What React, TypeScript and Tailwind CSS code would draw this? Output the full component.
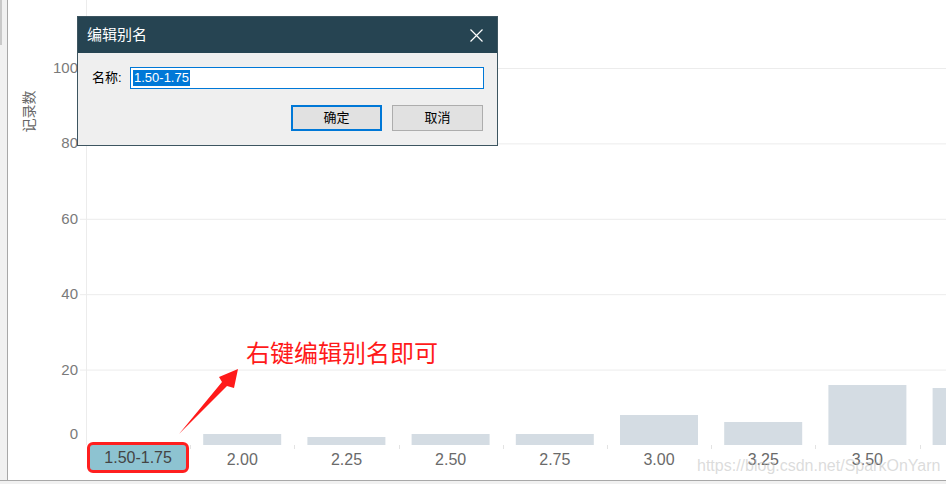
import React from 'react';

const bars = [0, 11, 8, 11, 11, 30, 23, 60, 57];
const cats = ['1.50-1.75', '2.00', '2.25', '2.50', '2.75', '3.00', '3.25', '3.50', ''];
const ticks = [100, 80, 60, 40, 20, 0];

const CAT_W = 104.2;
const PLOT_LEFT = 6; // axis inside the svg column
const yOf = (v: number) => 445 - v * 3.77;

const PlotArea: React.FC = () => (
  <svg width={866} height={445} className="block">
    {ticks.map((t) => (
      <line key={t} x1={0} x2={866} y1={yOf(t) + 0.5} y2={yOf(t) + 0.5} stroke="#ececec" strokeWidth={1} />
    ))}
    <line x1={PLOT_LEFT + 0.5} x2={PLOT_LEFT + 0.5} y1={0} y2={445} stroke="#ececec" strokeWidth={1} />
    {bars.map((h, i) =>
      h > 0 ? (
        <rect key={i} x={PLOT_LEFT + CAT_W * i + 13} y={445 - h} width={78} height={h} fill="#d4dce3" />
      ) : null
    )}
  </svg>
);

const XLabels: React.FC = () => (
  <div className="flex h-[35px] pl-[6px] text-[16px] text-[#6a6a6a]">
    {cats.map((c, i) => (
      <div key={i} className="relative w-[104.2px] shrink-0">
        {i > 0 && <span className="absolute left-0 top-0 h-[4px] w-px bg-[#e3e3e3]" />}
        {i === 0 ? (
          <div className="mx-[1px] mt-[-3px] h-[31px] flex items-center justify-center rounded-[6px] border-[3px] border-[#ff1f1f] bg-[#8dc3d1] text-[#444]">
            {c}
          </div>
        ) : (
          <div className="h-[30px] flex items-center justify-center">{c}</div>
        )}
      </div>
    ))}
  </div>
);

const RenameDialog: React.FC = () => (
  <div className="absolute left-[77px] top-[16px] w-[421px] h-[130px] border border-[#3d5560] bg-[#efefef] flex flex-col">
    <div className="h-[36px] bg-[#264452] flex items-center justify-between pl-[9px] pr-[14px]">
      <span className="text-white text-[15px]">编辑别名</span>
      <svg width="13" height="13" viewBox="0 0 13 13">
        <path d="M0.5 0.5 L12.5 12.5 M12.5 0.5 L0.5 12.5" stroke="#ffffff" strokeWidth="1.2" />
      </svg>
    </div>
    <div className="flex items-center mt-[14px] pl-[14px] pr-[13px] text-[13px] text-black">
      <span className="w-[38px]">名称:</span>
      <div className="flex-1 h-[22px] border border-[#0078d7] bg-white flex items-center px-[2px]">
        <span className="bg-[#0078d7] text-white leading-[16px] px-[1px] font-['Liberation_Sans',sans-serif]">1.50-1.75</span>
      </div>
    </div>
    <div className="flex justify-end gap-[10px] mt-[16px] pr-[14px] text-[13px]">
      <button className="w-[91px] h-[26px] border-2 border-[#0078d7] bg-[#e1e1e1]">确定</button>
      <button className="w-[91px] h-[26px] border border-[#adadad] bg-[#e1e1e1]">取消</button>
    </div>
  </div>
);

export default function App() {
  return (
    <div className="relative w-[946px] h-[484px] overflow-hidden bg-white font-['Liberation_Sans','Noto_Sans_CJK_SC',sans-serif]">
      <div className="flex h-[480px]">
        <div className="w-[8px] shrink-0 bg-[#f1f1f1] border-r border-[#a8a8a8]">
          <div className="w-[2px] h-[45px] bg-[#c9c9c9]" />
        </div>
        <div className="w-[40px] shrink-0 flex justify-center pt-[90px]">
          <div className="h-[43px] w-[40px] flex items-center justify-center">
            <span className="-rotate-90 whitespace-nowrap text-[14px] text-[#666] font-['Noto_Sans_CJK_SC',sans-serif]">记录数</span>
          </div>
        </div>
        <div className="relative w-[30px] shrink-0 text-[15px] text-[#7a7a7a]">
          {ticks.map((t) => (
            <span
              key={t}
              className="absolute right-0 leading-[18px]"
              style={{ top: (t === 0 ? yOf(t) - 11 : yOf(t)) - 9 }}
            >
              {t}
            </span>
          ))}
        </div>
        <div className="w-[2px] shrink-0" />
        <div className="flex-1 flex flex-col">
          <PlotArea />
          <XLabels />
        </div>
      </div>
      <div className="h-[4px] border-t border-[#a8a8a8] bg-[#f1f1f1]" />

      <RenameDialog />

      <div className="absolute left-[246px] top-[336px] text-[24px] leading-[32px] text-[#ff1a1a] font-['Noto_Sans_CJK_SC',sans-serif]">
        右键编辑别名即可
      </div>
      <svg className="absolute left-0 top-0" width={946} height={484} pointerEvents="none">
        <polygon points="179,434 222,382 219,377 238,369 234,388 227,386" fill="#ff1a1a" />
      </svg>

      <div className="absolute left-[697px] top-[454px] text-[16px] text-[rgba(190,190,190,0.55)] whitespace-nowrap">
        https://blog.csdn.net/SparkOnYarn
      </div>
    </div>
  );
}
